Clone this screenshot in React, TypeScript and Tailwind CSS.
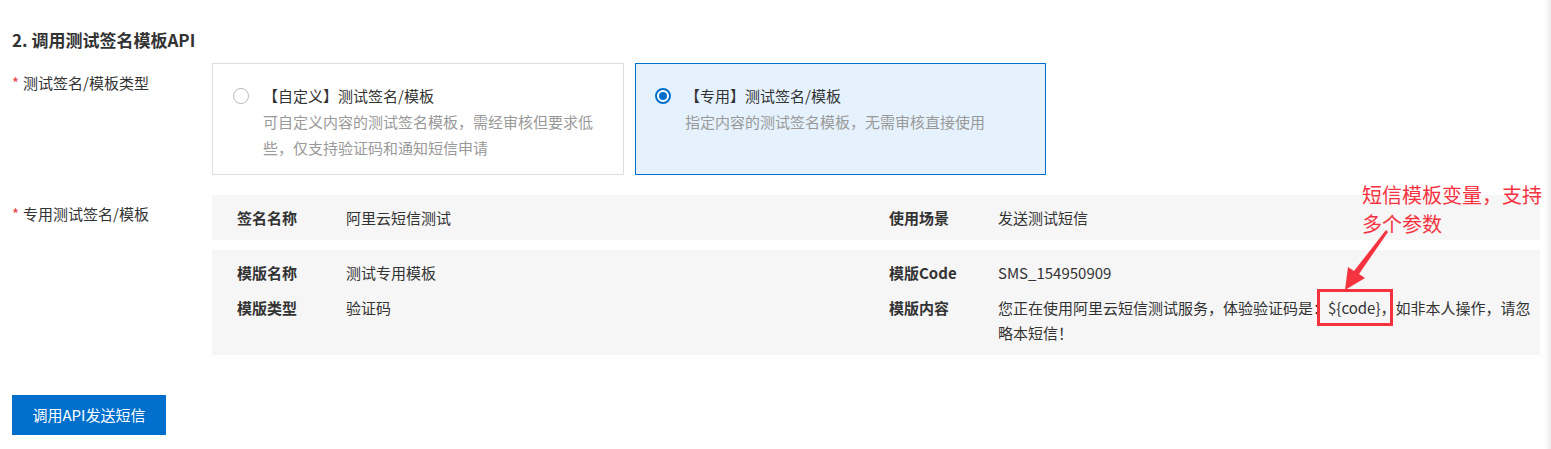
import React from "react";

const font = { fontFamily: '"Noto Sans CJK SC", "Noto Sans", sans-serif' };

function Radio({ checked }: { checked: boolean }) {
  if (checked) {
    return (
      <span className="flex h-[16px] w-[16px] shrink-0 items-center justify-center rounded-full border-2 border-[#0070cc] bg-white">
        <span className="h-[8px] w-[8px] rounded-full bg-[#0070cc]" />
      </span>
    );
  }
  return <span className="block h-[16px] w-[16px] shrink-0 rounded-full border border-[#bbbbbb] bg-white" />;
}

function Field({ label, children, valueWidth }: { label: string; children: React.ReactNode; valueWidth: string }) {
  return (
    <div className="flex">
      <div className="w-[109px] shrink-0 font-bold text-[#333]">{label}</div>
      <div className={valueWidth + " text-[#333]"}>{children}</div>
    </div>
  );
}

export default function App() {
  return (
    <div className="relative h-[449px] w-full overflow-hidden bg-white px-[12px] text-[15px] text-[#333]" style={font}>
      <h2 className="pt-[28px] text-[17px] font-bold leading-[24px] text-[#333]">2. 调用测试签名模板API</h2>

      {/* Row 1 */}
      <div className="mt-[11px] flex">
        <div className="w-[200px] shrink-0 pt-[10px] leading-[20px]">
          <span className="mr-[4px] text-[#e8414a]">*</span>测试签名/模板类型
        </div>
        <div className="flex gap-[11px]">
          <div className="flex h-[112px] w-[412px] gap-[14px] border border-[#dddddd] bg-white pl-[20px] pr-[20px] pt-[22px]">
            <div className="mt-[2px] w-[16px] shrink-0">
              <Radio checked={false} />
            </div>
            <div>
              <div className="leading-[20px] text-[#333]">【自定义】测试签名/模板</div>
              <div className="mt-[3px] leading-[26px] text-[#999]">
                可自定义内容的测试签名模板，需经审核但要求低些，仅支持验证码和通知短信申请
              </div>
            </div>
          </div>
          <div className="flex h-[112px] w-[411px] gap-[14px] border border-[#0070cc] bg-[#e5f2fd] pl-[19px] pr-[20px] pt-[22px]">
            <div className="mt-[2px] w-[16px] shrink-0">
              <Radio checked />
            </div>
            <div>
              <div className="leading-[20px] text-[#333]">【专用】测试签名/模板</div>
              <div className="mt-[3px] leading-[26px] text-[#999]">指定内容的测试签名模板，无需审核直接使用</div>
            </div>
          </div>
        </div>
      </div>

      {/* Row 2 */}
      <div className="mt-[20px] flex">
        <div className="w-[200px] shrink-0 pt-[9px] leading-[20px]">
          <span className="mr-[4px] text-[#e8414a]">*</span>专用测试签名/模板
        </div>
        <div className="flex w-[1328px] shrink-0 flex-col gap-[10px]">
          <div className="flex h-[45px] items-center bg-[#f6f6f6] pl-[25px] leading-[25px]">
            <div className="w-[652px] shrink-0">
              <Field label="签名名称" valueWidth="w-[500px]">阿里云短信测试</Field>
            </div>
            <Field label="使用场景" valueWidth="w-[535px]">发送测试短信</Field>
          </div>
          <div className="flex bg-[#f6f6f6] pb-[10px] pl-[25px] pt-[10px] leading-[25px]">
            <div className="flex w-[652px] shrink-0 flex-col gap-[10px]">
              <Field label="模版名称" valueWidth="w-[500px]">测试专用模板</Field>
              <Field label="模版类型" valueWidth="w-[500px]">验证码</Field>
            </div>
            <div className="flex flex-col gap-[10px]">
              <Field label="模版Code" valueWidth="w-[535px]">SMS_154950909</Field>
              <Field label="模版内容" valueWidth="w-[535px]">
                您正在使用阿里云短信测试服务，体验验证码是：
                <span className="relative inline-block">
                  {"${code}，"}
                  <span className="pointer-events-none absolute -bottom-[6px] -left-[11px] -top-[6px] right-[2px] border-[3px] border-[#f5333f]" />
                </span>
                如非本人操作，请忽略本短信！
              </Field>
            </div>
          </div>
        </div>
      </div>

      <button className="mt-[40px] h-[40px] w-[154px] bg-[#0070cc] text-[15px] text-white">调用API发送短信</button>

      {/* annotation */}
      <div className="absolute left-[1362px] top-[180px] text-[20px] leading-[29px] text-[#f5333f]">
        短信模板变量，支持
        <br />
        多个参数
      </div>
      <svg className="absolute left-[1335px] top-[226px]" width="60" height="70" viewBox="0 0 60 70">
        <polygon points="51,4 53,6 24,48 30,52 10,64 13,41 19,45" fill="#f5333f" />
      </svg>

      {/* right edge shadow */}
      <div className="absolute bottom-0 right-0 top-0 w-[6px] bg-gradient-to-r from-transparent to-[#ececec]" />
    </div>
  );
}
